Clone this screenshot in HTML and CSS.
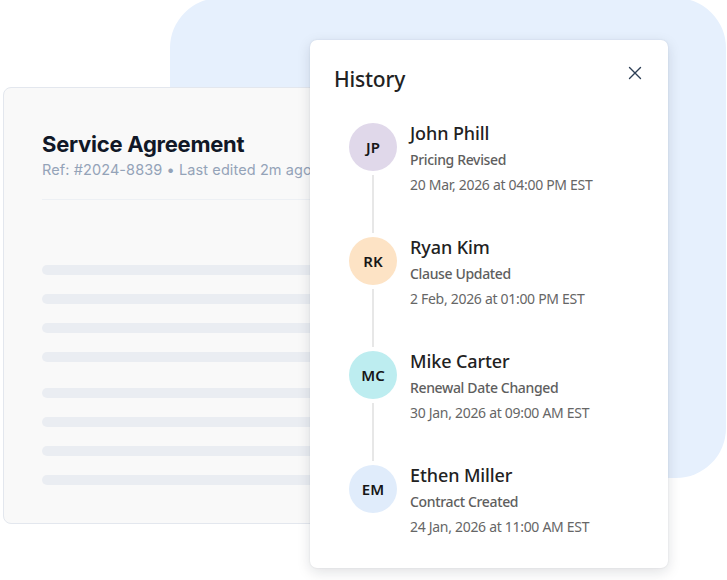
FILE: index.html
```html
<!DOCTYPE html>
<html lang="en">
<head>
<meta charset="utf-8">
<title>History</title>
<link rel="stylesheet" href="styles.css">
</head>
<body>
<div class="stage">
  <div class="backdrop"></div>

  <section class="doc-card">
    <h1 class="doc-title">Service Agreement</h1>
    <p class="doc-meta">Ref: #2024-8839 • Last edited 2m ago</p>
    <div class="doc-divider"></div>
    <div class="doc-lines">
      <div class="line-group">
        <span class="bar"></span><span class="bar"></span><span class="bar"></span><span class="bar"></span>
      </div>
      <div class="line-group">
        <span class="bar"></span><span class="bar"></span><span class="bar"></span><span class="bar"></span>
      </div>
    </div>
  </section>

  <section class="modal">
    <header class="modal-head">
      <h2 class="modal-title">History</h2>
      <svg class="close" width="14" height="14" viewBox="0 0 14 14" aria-label="Close">
        <path d="M1.5 1.5 L12.5 12.5 M12.5 1.5 L1.5 12.5" stroke="#2c3e55" stroke-width="1.4" stroke-linecap="round" fill="none"/>
      </svg>
    </header>
    <ol class="timeline">
      <li class="event">
        <div class="rail"><span class="avatar av-jp">JP</span><span class="connector"></span></div>
        <div class="event-text">
          <div class="name">John Phill</div>
          <div class="action">Pricing Revised</div>
          <div class="date">20 Mar, 2026 at 04:00 PM EST</div>
        </div>
      </li>
      <li class="event">
        <div class="rail"><span class="avatar av-rk">RK</span><span class="connector"></span></div>
        <div class="event-text">
          <div class="name">Ryan Kim</div>
          <div class="action">Clause Updated</div>
          <div class="date">2 Feb, 2026 at 01:00 PM EST</div>
        </div>
      </li>
      <li class="event">
        <div class="rail"><span class="avatar av-mc">MC</span><span class="connector"></span></div>
        <div class="event-text">
          <div class="name">Mike Carter</div>
          <div class="action">Renewal Date Changed</div>
          <div class="date">30 Jan, 2026 at 09:00 AM EST</div>
        </div>
      </li>
      <li class="event last">
        <div class="rail"><span class="avatar av-em">EM</span></div>
        <div class="event-text">
          <div class="name">Ethen Miller</div>
          <div class="action">Contract Created</div>
          <div class="date">24 Jan, 2026 at 11:00 AM EST</div>
        </div>
      </li>
    </ol>
  </section>
</div>
</body>
</html>
```
FILE: styles.css
```css
* { box-sizing: border-box; }
html, body { margin: 0; padding: 0; background: #ffffff; }
body { font-family: "Noto Sans", "Open Sans", sans-serif; }

.stage {
  position: relative;
  width: 727px;
  height: 580px;
  overflow: hidden;
}

.backdrop {
  position: absolute;
  left: 170px;
  top: -2px;
  width: 556px;
  height: 480px;
  background: #e6f0fd;
  border-radius: 50px;
}

.doc-card {
  position: absolute;
  left: 3px;
  top: 87px;
  width: 340px;
  height: 437px;
  background: #f9f9f9;
  border: 1px solid #e3e7ee;
  border-radius: 8px;
  padding: 42px 0 0 38px;
  font-family: Inter, "Noto Sans", sans-serif;
}

.doc-title {
  margin: 0;
  font-size: 22px;
  line-height: 28px;
  font-weight: 700;
  color: #111827;
  letter-spacing: -0.25px;
}

.doc-meta {
  margin: 2px 0 0;
  font-size: 14.5px;
  line-height: 20px;
  color: #94a3b8;
  white-space: nowrap;
  letter-spacing: 0.1px;
}

.doc-divider {
  margin-top: 19px;
  height: 1px;
  background: #edf0f4;
}

.doc-lines {
  margin-top: 65px;
  display: flex;
  flex-direction: column;
  gap: 26px;
}

.line-group {
  display: flex;
  flex-direction: column;
  gap: 19px;
}

.bar {
  display: block;
  height: 10px;
  border-radius: 5px;
  background: #eaedf2;
}

.modal {
  position: absolute;
  left: 310px;
  top: 40px;
  width: 358px;
  height: 528px;
  background: #ffffff;
  border-radius: 7px;
  box-shadow: 0 4px 14px rgba(15, 23, 42, 0.13), 0 0 2px rgba(15, 23, 42, 0.1);
  padding: 25px 26px 0 24px;
}

.modal-head {
  display: flex;
  justify-content: space-between;
  align-items: flex-start;
}

.modal-title {
  margin: 0;
  font-size: 21px;
  line-height: 28px;
  font-weight: 500;
  color: #222222;
  letter-spacing: -0.2px;
}

.close {
  display: block;
  margin-top: 1px;
}

.timeline {
  list-style: none;
  margin: 28px 0 0;
  padding: 0 0 0 15px;
}

.event {
  display: flex;
  gap: 13px;
  min-height: 114px;
}

.event.last { min-height: 0; }

.rail {
  display: flex;
  flex-direction: column;
  align-items: center;
  width: 48px;
  padding-top: 2px;
}

.avatar {
  width: 48px;
  height: 48px;
  border-radius: 50%;
  display: flex;
  align-items: center;
  justify-content: center;
  font-size: 15px;
  font-weight: 600;
  color: #161616;
  flex: none;
}

.av-jp { background: #e0d8ea; }
.av-rk { background: #fde3c5; }
.av-mc { background: #bdedf0; }
.av-em { background: #e0ecfb; }

.connector {
  flex: 1;
  width: 2px;
  background: #e7e7e7;
  margin: 4px 0 2px;
}

.name {
  font-size: 18px;
  line-height: 24px;
  font-weight: 500;
  color: #222222;
  letter-spacing: -0.1px;
}

.action {
  margin-top: 5px;
  font-size: 14px;
  line-height: 20px;
  font-weight: 500;
  color: #5e5e5e;
  letter-spacing: -0.35px;
}

.date {
  margin-top: 5px;
  font-size: 14px;
  line-height: 20px;
  color: #666666;
  letter-spacing: -0.3px;
}
```
